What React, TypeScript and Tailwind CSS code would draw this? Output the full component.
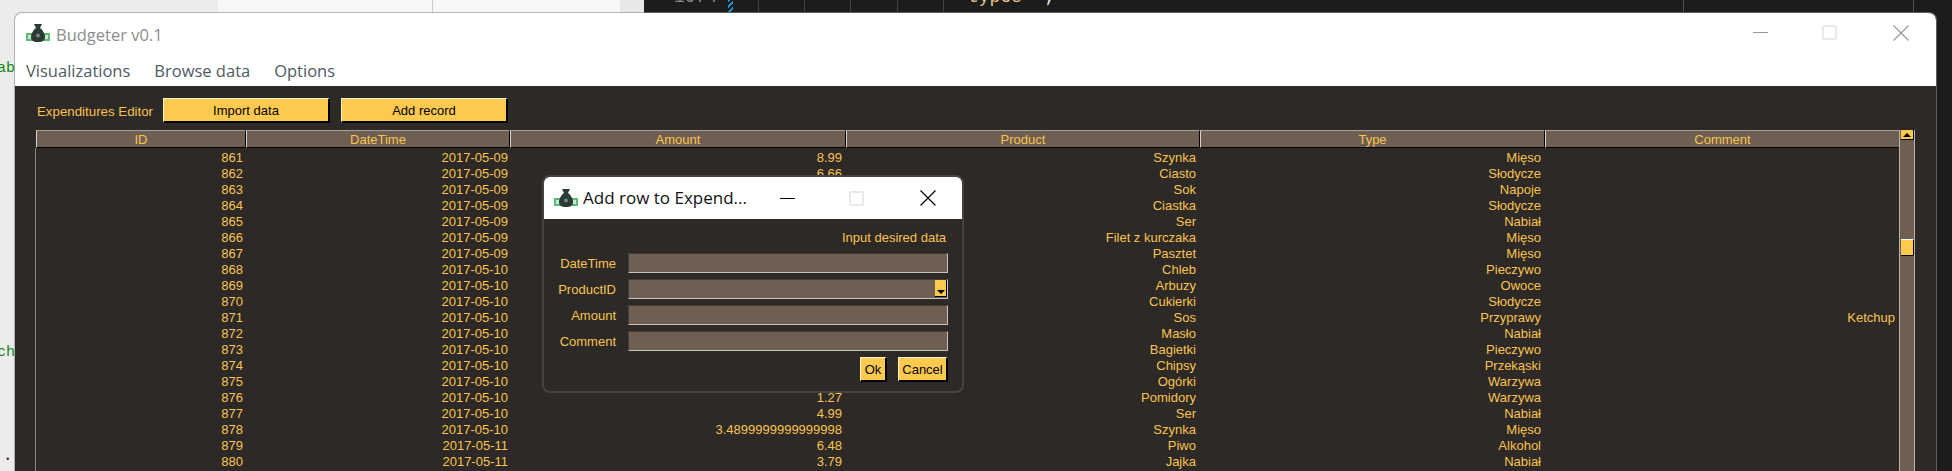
import React from 'react';

const rowCols = 'grid grid-cols-[210px_264px_336px_354px_345px_355px]';

type Row = [number, string, string, string, string, string?];

const rows: Row[] = [
  [861, '2017-05-09', '8.99', 'Szynka', 'Mięso'],
  [862, '2017-05-09', '6.66', 'Ciasto', 'Słodycze'],
  [863, '2017-05-09', '', 'Sok', 'Napoje'],
  [864, '2017-05-09', '', 'Ciastka', 'Słodycze'],
  [865, '2017-05-09', '', 'Ser', 'Nabiał'],
  [866, '2017-05-09', '', 'Filet z kurczaka', 'Mięso'],
  [867, '2017-05-09', '', 'Pasztet', 'Mięso'],
  [868, '2017-05-10', '', 'Chleb', 'Pieczywo'],
  [869, '2017-05-10', '', 'Arbuzy', 'Owoce'],
  [870, '2017-05-10', '', 'Cukierki', 'Słodycze'],
  [871, '2017-05-10', '', 'Sos', 'Przyprawy', 'Ketchup'],
  [872, '2017-05-10', '', 'Masło', 'Nabiał'],
  [873, '2017-05-10', '', 'Bagietki', 'Pieczywo'],
  [874, '2017-05-10', '', 'Chipsy', 'Przekąski'],
  [875, '2017-05-10', '', 'Ogórki', 'Warzywa'],
  [876, '2017-05-10', '1.27', 'Pomidory', 'Warzywa'],
  [877, '2017-05-10', '4.99', 'Ser', 'Nabiał'],
  [878, '2017-05-10', '3.4899999999999998', 'Szynka', 'Mięso'],
  [879, '2017-05-11', '6.48', 'Piwo', 'Alkohol'],
  [880, '2017-05-11', '3.79', 'Jajka', 'Nabiał'],
];

const headers = ['ID', 'DateTime', 'Amount', 'Product', 'Type', 'Comment'];

const BagIcon = ({ className }: { className: string }) => (
  <svg viewBox="0 0 24 20" className={className}>
    <rect x="0" y="10" width="24" height="8" fill="#5dbb7a" />
    <rect x="2" y="12" width="3" height="4" fill="#c5e8cf" />
    <rect x="19" y="12" width="3" height="4" fill="#c5e8cf" />
    <path d="M8 1h8l-2 4h-4z" fill="#2c3a33" />
    <path d="M10 5h4c3 2 5 6 5 9 0 3-2 5-7 5s-7-2-7-5c0-3 2-7 5-9z" fill="#2c3a33" />
    <circle cx="12" cy="12.5" r="2" fill="#6f8a7a" />
  </svg>
);

const MinIcon = ({ className }: { className: string }) => <div className={`h-px w-[15px] ${className}`} />;

const MaxIcon = () => <div className="h-[15px] w-[15px] rounded-[2px] border-2 border-[#e9e9e9]" />;

const CloseIcon = ({ color }: { color: string }) => (
  <svg viewBox="0 0 16 16" className={`h-4 w-4 ${color}`} fill="none" stroke="currentColor" strokeWidth="1.2">
    <path d="M0.5 0.5l15 15M15.5 0.5l-15 15" />
  </svg>
);

const YellowButton = ({ label, className }: { label: string; className: string }) => (
  <button className={`flex h-[25px] items-center justify-center border-t border-l border-t-[#fff3d0] border-l-[#fff3d0] border-r-2 border-b-2 border-r-black border-b-black bg-[#fec94f] pt-[2px] text-[13px] text-black ${className}`}>
    {label}
  </button>
);

const Field = ({ label, combo }: { label: string; combo?: boolean }) => (
  <div className="flex h-5 items-center">
    <div className="w-[62px] pt-px whitespace-nowrap text-right text-[#f8c44f]">{label}</div>
    <div className="ml-3 flex h-5 flex-1 justify-end border-t border-l border-t-[#453d38] border-l-[#453d38] border-r border-b border-r-[#c9c3bd] border-b-[#c9c3bd] bg-[#6f5e52]">
      {combo && (
        <div className="flex h-[17px] w-3 items-end justify-center border-r border-b border-black bg-[#fec94f] pb-[2px]">
          <div className="h-0 w-0 border-x-[4px] border-t-[4px] border-x-transparent border-t-black" />
        </div>
      )}
    </div>
  </div>
);

const Backdrop = () => (
  <div className="absolute inset-0 flex font-['Liberation_Mono',monospace]">
    <div className="w-[218px] bg-[#ececec]">
      <div className="mt-[59px] -ml-[3px] text-[15px] leading-5 text-[#12870f]">ab</div>
      <div className="mt-[264px] -ml-[3px] text-[15px] leading-5 text-[#12870f]">ch</div>
      <div className="mt-[93px] pl-[5px] text-[9px] leading-none text-[#333]">•</div>
    </div>
    <div className="w-[215px] border-r border-[#c8c8c8] bg-[#f7f7f7]" />
    <div className="w-[187px] bg-[#f7f7f7]" />
    <div className="w-6 bg-[#e8e8e8]" />
    <div className="relative flex-1 overflow-hidden bg-[#1c1c1c]">
      <span className="absolute top-[-13px] left-[30px] text-[18px] leading-5 text-[#8a8a8a]">1974</span>
      <div className="absolute top-0 left-[84px] h-3 w-[5px] bg-[repeating-linear-gradient(135deg,#1f8fbf_0_2px,#1c1c1c_2px_4px)]" />
      <div className="absolute top-0 left-[114px] h-3 w-px bg-[#404040]" />
      <div className="absolute top-0 left-[160px] h-3 w-px bg-[#404040]" />
      <div className="absolute top-0 left-[206px] h-3 w-px bg-[#404040]" />
      <div className="absolute top-0 left-[253px] h-3 w-px bg-[#404040]" />
      <div className="absolute top-0 left-[299px] h-3 w-px bg-[#404040]" />
      <span className="absolute top-[-13px] left-[324px] text-[18px] leading-5 text-[#e8c48a]">types</span>
      <span className="absolute top-[-13px] left-[400px] text-[18px] leading-5 text-[#e8e8e8]">;</span>
      <div className="absolute top-0 left-[1039px] h-3 w-px bg-[#505050]" />
      <div className="absolute top-0 left-[1269px] h-3 w-px bg-[#505050]" />
    </div>
  </div>
);

const Dialog = () => (
  <div className="absolute top-[89px] left-[527px] flex h-[218px] w-[422px] flex-col overflow-hidden rounded-lg border-2 border-[#45423f] bg-[#2d2926]">
    <div className="flex h-[42px] shrink-0 items-center bg-white pl-[10px] font-['Open_Sans',sans-serif] text-[17px] text-[#111]">
      <BagIcon className="h-5 w-6" />
      <span className="ml-[5px] w-[175px] whitespace-nowrap">Add row to Expend...</span>
      <div className="ml-[22px] flex items-center">
        <MinIcon className="bg-black" />
        <div className="ml-[54px]"><MaxIcon /></div>
        <div className="ml-[56px]"><CloseIcon color="text-black" /></div>
      </div>
    </div>
    <div className="flex flex-1 flex-col pr-[14px] pl-[10px] font-['Liberation_Sans',sans-serif] text-[13px] leading-4 text-[#f8c44f]">
      <div className="mt-[10px] h-4 pt-px pr-[2px] text-right">Input desired data</div>
      <div className="mt-2 flex flex-col gap-[6px]">
        <Field label="DateTime" />
        <Field label="ProductID" combo />
        <Field label="Amount" />
        <Field label="Comment" />
      </div>
      <div className="mt-[6px] flex justify-end gap-[11px]">
        <YellowButton label="Ok" className="w-[27px]" />
        <YellowButton label="Cancel" className="w-[50px]" />
      </div>
    </div>
  </div>
);

export default function App() {
  return (
    <div className="relative h-[471px] w-[1952px] overflow-hidden bg-[#1c1c1c]">
      <Backdrop />

      {/* Main window */}
      <div className="absolute top-[12px] left-[14px] flex h-[470px] w-[1923px] flex-col overflow-hidden rounded-t-lg border border-[#8888889a] bg-white bg-clip-padding">
        <div className="flex h-[39px] shrink-0 items-center pl-[11px] font-['Open_Sans',sans-serif]">
          <BagIcon className="h-5 w-6" />
          <span className="mt-[4px] ml-[6px] text-[16.5px] leading-5 text-[#8c8c8c]">Budgeter v0.1</span>
          <div className="ml-auto flex items-center">
            <MinIcon className="bg-[#999]" />
            <div className="ml-[54px]"><MaxIcon /></div>
            <div className="mr-[27px] ml-[56px]"><CloseIcon color="text-[#999]" /></div>
          </div>
        </div>
        <div className="flex h-[34px] shrink-0 items-center gap-[24px] pt-[5px] pl-[11px] font-['Open_Sans',sans-serif] text-[16.5px] text-[#505a64]">
          <span>Visualizations</span>
          <span>Browse data</span>
          <span>Options</span>
        </div>

        <div className="relative flex-1 bg-[#2d2926] pl-[21px] font-['Liberation_Sans',sans-serif] text-[13px] leading-4 text-[#f8c44f]">
          <div className="mt-[12px] flex h-[25px] items-center">
            <div className="w-[127px] pt-[2px] pl-[1px] text-[13.3px] whitespace-nowrap">Expenditures Editor</div>
            <YellowButton label="Import data" className="w-[167px]" />
            <YellowButton label="Add record" className="ml-[11px] w-[167px]" />
          </div>

          <div className="mt-[7px] flex">
            <div className="w-[1864px]">
              <div className={rowCols}>
                {headers.map((h) => (
                  <div
                    key={h}
                    className="flex h-[18px] items-center justify-center border-t border-l border-t-[#a8a19b] border-l-[#d8d3ce] border-r border-b border-r-black border-b-black bg-[#6f5e52] pt-[2px]"
                  >
                    {h}
                  </div>
                ))}
              </div>
              <div className="-ml-px h-[330px] border-l border-[#8a8580] pt-[2px]">
                {rows.map(([id, date, amount, product, type, comment]) => (
                  <div key={id} className={`${rowCols} h-4 whitespace-nowrap text-right`}>
                    <div className="pr-[3px]">{id}</div>
                    <div className="pr-[2px]">{date}</div>
                    <div className="pr-1">{amount}</div>
                    <div className="pr-1">{product}</div>
                    <div className="pr-1">{type}</div>
                    <div className="pr-[5px]">{comment}</div>
                  </div>
                ))}
              </div>
            </div>

            {/* Scrollbar */}
            <div className="-ml-px flex h-[348px] w-[16px] flex-col border-x border-x-[#b9b3ad] bg-[#6f5e52] pl-px">
              <div className="flex h-[10px] shrink-0 items-center justify-center border-r border-b border-black bg-[#fec94f]">
                <div className="h-0 w-0 border-x-[4px] border-b-[4px] border-x-transparent border-b-black" />
              </div>
              <div className="mt-[99px] h-[17px] shrink-0 border-t border-r border-b border-t-white border-r-black border-b-black bg-[#fec94f]" />
            </div>
          </div>

          <Dialog />
        </div>
      </div>
    </div>
  );
}
